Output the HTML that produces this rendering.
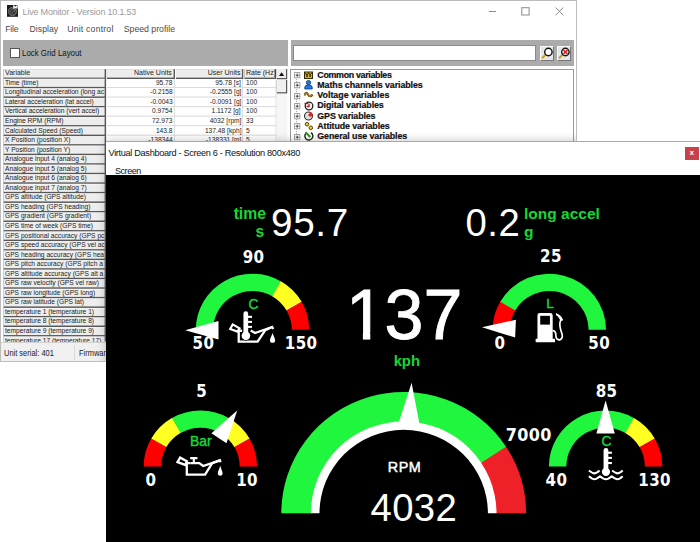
<!DOCTYPE html>
<html><head><meta charset="utf-8"><title>Live Monitor</title>
<style>
html,body{margin:0;padding:0;background:#fff;}
body{width:700px;height:542px;position:relative;overflow:hidden;font-family:"Liberation Sans",sans-serif;}
#mw{position:absolute;left:0;top:0;width:577px;height:362px;background:#fff;overflow:hidden;}
#mwb{position:absolute;left:0;top:0;width:577px;height:362px;box-sizing:border-box;border:1px solid #bcbcbc;}
.abs{position:absolute;}
#title{left:22.6px;top:5.5px;font-size:9px;letter-spacing:-0.2px;color:#9a9a9a;white-space:nowrap;line-height:12px;}
.menu{top:23.4px;font-size:8.7px;color:#4a4a4a;white-space:nowrap;line-height:12px;}
.gp{background:#ababab;top:40px;height:26.4px;}
#cb{left:10.3px;top:48.3px;width:9.4px;height:9.6px;background:#fff;border:1px solid #555;box-sizing:border-box;}
#lock{left:22px;top:47.2px;font-size:9.4px;color:#111;line-height:11px;white-space:nowrap;transform:scaleX(0.84);transform-origin:0 0;}
.hd{top:69px;height:10px;box-sizing:border-box;font-size:7.4px;line-height:8.4px;color:#222;white-space:nowrap;overflow:visible;}
.r{position:absolute;left:0;width:290px;height:9.545px;}
.r div{position:absolute;top:0;height:9.545px;box-sizing:border-box;font-size:7px;line-height:8.2px;color:#222;white-space:nowrap;overflow:hidden;}
.c1{left:3px;width:101.4px;padding-left:2.3px;}
.tl{display:inline-block;transform:scaleX(0.95);transform-origin:0 50%;}
.trr{display:inline-block;transform:scaleX(0.95);transform-origin:100% 50%;}
.c2{left:107px;width:68px;text-align:right;padding-right:2.4px;}
.c3{left:175px;width:68.5px;text-align:right;padding-right:2.4px;}
.c4{left:243.5px;width:32.5px;padding-left:2.8px;}
#sb{left:275.5px;top:68.5px;width:11.5px;height:273px;background:#f4f4f4;}
#status{left:0;top:341.5px;width:575px;height:19.5px;background:#f0f0f0;border-top:1px solid #d0d0d0;font-size:8.8px;color:#1a1a1a;}
#status span.t{transform:scaleX(0.85);transform-origin:0 0;line-height:11px;}
.tn{position:absolute;left:291px;height:10px;width:280px;white-space:nowrap;}
.pm{position:absolute;left:2.6px;top:2.3px;}
.ti{position:absolute;left:12.5px;top:0;}
.tt{position:absolute;left:26.3px;top:-1.2px;font-weight:bold;font-size:8.9px;line-height:12px;color:#111;letter-spacing:-0.27px;-webkit-text-stroke:0.2px #111;}
#dw{position:absolute;left:106px;top:141px;width:594px;height:402px;background:#fff;box-shadow:inset 0 1px 0 #a8a8a8;}
#dtitle{left:2.5px;top:5.8px;font-size:9.2px;letter-spacing:-0.33px;color:#111;line-height:12px;white-space:nowrap;}
#dscreen{left:9px;top:23.6px;font-size:9px;letter-spacing:-0.45px;color:#111;line-height:12px;}
#dx{left:579px;top:5.5px;width:13.5px;height:13.5px;background:#c8404a;color:#fff;font-size:8px;font-weight:bold;line-height:12.5px;text-align:center;}
#dash{position:absolute;left:106px;top:174.5px;width:594px;height:367.5px;background:#000;}
.lb{font-family:"DejaVu Sans Condensed","DejaVu Sans",sans-serif;font-weight:bold;fill:#fff;}
.gt{font-family:"Liberation Sans",sans-serif;fill:#14d834;}
.wt{font-family:"Liberation Sans",sans-serif;fill:#fff;}
</style></head><body>
<div id="mw">
<svg class="abs" style="left:6.6px;top:5.1px" width="11.8" height="11.8" viewBox="0 0 12 12"><rect width="12" height="12" fill="#1c1c1c"/><circle cx="5.6" cy="6.6" r="4.2" fill="#5a5a5a"/><path d="M2,9.5 L9,2.5 M1.5,6.5 L6,2 M4.5,11 L10,5.5 M2.5,3.5 L8.5,9.5 M1.5,6 L6,10.5" stroke="#2a2a2a" stroke-width="0.9" fill="none"/><circle cx="5.6" cy="6.6" r="4.2" fill="none" stroke="#8a8a8a" stroke-width="0.7"/><path d="M7,3.8 L7,0.9 L8.6,2.6 L10.2,0.9 L10.2,3.8" fill="none" stroke="#fff" stroke-width="1.2"/></svg>
<div id="title" class="abs">Live Monitor - Version 10.1.53</div>
<svg class="abs" style="left:485.6px;top:4.8px" width="84" height="14" viewBox="0 0 84 14"><g fill="none" stroke="#8a8a8a" stroke-width="1"><path d="M3,6.5 L10,6.5"/><rect x="35.8" y="2.7" width="7.3" height="7.3"/><path d="M69.5,2.5 L77.3,10.3 M77.3,2.5 L69.5,10.3"/></g></svg>
<div class="menu abs" style="left:5.3px;letter-spacing:-0.25px">File</div>
<div class="menu abs" style="left:29.6px">Display</div>
<div class="menu abs" style="left:67.2px;letter-spacing:0.2px">Unit control</div>
<div class="menu abs" style="left:123.8px">Speed profile</div>
<div class="gp abs" style="left:3px;width:284.5px"></div>
<div class="gp abs" style="left:291px;width:283px"></div>
<div id="cb" class="abs"></div>
<div id="lock" class="abs">Lock Grid Layout</div>
<div class="abs" style="left:292.5px;top:44.5px;width:243px;height:16px;background:#fff;border:1px solid #8a8a8a;box-sizing:border-box"></div>
<div class="abs" style="left:540px;top:46px;width:14.4px;height:14.6px;background:#e6e6e6;border:1px solid #f8f8f8;border-right-color:#777;border-bottom-color:#777;box-sizing:border-box"></div>
<div class="abs" style="left:557px;top:46px;width:14.4px;height:14.6px;background:#e6e6e6;border:1px solid #f8f8f8;border-right-color:#777;border-bottom-color:#777;box-sizing:border-box"></div>
<svg class="abs" style="left:540.1px;top:46.4px" width="32" height="14" viewBox="0 0 32 14"><g fill="none"><path d="M2,12.3 L5.5,8.8" stroke="#c8a020" stroke-width="2"/><circle cx="8.4" cy="6" r="3.7" stroke="#111" stroke-width="1.4" fill="#fff"/><path d="M19,12.3 L22.5,8.8" stroke="#c8a020" stroke-width="2"/><circle cx="25.4" cy="6" r="3.7" stroke="#111" stroke-width="1.4" fill="#fff"/><path d="M23.4,4 L27.4,8 M27.4,4 L23.4,8" stroke="#e01010" stroke-width="1.5"/></g></svg>
<svg class="abs" style="left:0;top:0" width="300" height="342" viewBox="0 0 300 342">
<rect x="3.5" y="69.1" width="102.6" height="272.4" fill="#585858"/>
<rect x="3.5" y="69.1" width="101.1" height="8.5" fill="#ececec"/>
<rect x="3.5" y="78.85" width="101.1" height="8.05" fill="#ededed"/>
<rect x="3.5" y="78.85" width="101.1" height="0.6" fill="#fafafa"/>
<rect x="3.5" y="88.39" width="101.1" height="8.05" fill="#ededed"/>
<rect x="3.5" y="88.39" width="101.1" height="0.6" fill="#fafafa"/>
<rect x="3.5" y="97.94" width="101.1" height="8.05" fill="#ededed"/>
<rect x="3.5" y="97.94" width="101.1" height="0.6" fill="#fafafa"/>
<rect x="3.5" y="107.48" width="101.1" height="8.05" fill="#ededed"/>
<rect x="3.5" y="107.48" width="101.1" height="0.6" fill="#fafafa"/>
<rect x="3.5" y="117.03" width="101.1" height="8.05" fill="#ededed"/>
<rect x="3.5" y="117.03" width="101.1" height="0.6" fill="#fafafa"/>
<rect x="3.5" y="126.57" width="101.1" height="8.05" fill="#ededed"/>
<rect x="3.5" y="126.57" width="101.1" height="0.6" fill="#fafafa"/>
<rect x="3.5" y="136.12" width="101.1" height="8.05" fill="#ededed"/>
<rect x="3.5" y="136.12" width="101.1" height="0.6" fill="#fafafa"/>
<rect x="3.5" y="145.66" width="101.1" height="8.05" fill="#ededed"/>
<rect x="3.5" y="145.66" width="101.1" height="0.6" fill="#fafafa"/>
<rect x="3.5" y="155.21" width="101.1" height="8.05" fill="#ededed"/>
<rect x="3.5" y="155.21" width="101.1" height="0.6" fill="#fafafa"/>
<rect x="3.5" y="164.75" width="101.1" height="8.05" fill="#ededed"/>
<rect x="3.5" y="164.75" width="101.1" height="0.6" fill="#fafafa"/>
<rect x="3.5" y="174.30" width="101.1" height="8.05" fill="#ededed"/>
<rect x="3.5" y="174.30" width="101.1" height="0.6" fill="#fafafa"/>
<rect x="3.5" y="183.84" width="101.1" height="8.05" fill="#ededed"/>
<rect x="3.5" y="183.84" width="101.1" height="0.6" fill="#fafafa"/>
<rect x="3.5" y="193.39" width="101.1" height="8.05" fill="#ededed"/>
<rect x="3.5" y="193.39" width="101.1" height="0.6" fill="#fafafa"/>
<rect x="3.5" y="202.94" width="101.1" height="8.05" fill="#ededed"/>
<rect x="3.5" y="202.94" width="101.1" height="0.6" fill="#fafafa"/>
<rect x="3.5" y="212.48" width="101.1" height="8.05" fill="#ededed"/>
<rect x="3.5" y="212.48" width="101.1" height="0.6" fill="#fafafa"/>
<rect x="3.5" y="222.03" width="101.1" height="8.05" fill="#ededed"/>
<rect x="3.5" y="222.03" width="101.1" height="0.6" fill="#fafafa"/>
<rect x="3.5" y="231.57" width="101.1" height="8.05" fill="#ededed"/>
<rect x="3.5" y="231.57" width="101.1" height="0.6" fill="#fafafa"/>
<rect x="3.5" y="241.11" width="101.1" height="8.05" fill="#ededed"/>
<rect x="3.5" y="241.11" width="101.1" height="0.6" fill="#fafafa"/>
<rect x="3.5" y="250.66" width="101.1" height="8.05" fill="#ededed"/>
<rect x="3.5" y="250.66" width="101.1" height="0.6" fill="#fafafa"/>
<rect x="3.5" y="260.20" width="101.1" height="8.05" fill="#ededed"/>
<rect x="3.5" y="260.20" width="101.1" height="0.6" fill="#fafafa"/>
<rect x="3.5" y="269.75" width="101.1" height="8.05" fill="#ededed"/>
<rect x="3.5" y="269.75" width="101.1" height="0.6" fill="#fafafa"/>
<rect x="3.5" y="279.29" width="101.1" height="8.05" fill="#ededed"/>
<rect x="3.5" y="279.29" width="101.1" height="0.6" fill="#fafafa"/>
<rect x="3.5" y="288.84" width="101.1" height="8.05" fill="#ededed"/>
<rect x="3.5" y="288.84" width="101.1" height="0.6" fill="#fafafa"/>
<rect x="3.5" y="298.38" width="101.1" height="8.05" fill="#ededed"/>
<rect x="3.5" y="298.38" width="101.1" height="0.6" fill="#fafafa"/>
<rect x="3.5" y="307.93" width="101.1" height="8.05" fill="#ededed"/>
<rect x="3.5" y="307.93" width="101.1" height="0.6" fill="#fafafa"/>
<rect x="3.5" y="317.48" width="101.1" height="8.05" fill="#ededed"/>
<rect x="3.5" y="317.48" width="101.1" height="0.6" fill="#fafafa"/>
<rect x="3.5" y="327.02" width="101.1" height="8.05" fill="#ededed"/>
<rect x="3.5" y="327.02" width="101.1" height="0.6" fill="#fafafa"/>
<rect x="3.5" y="336.56" width="101.1" height="8.05" fill="#ededed"/>
<rect x="3.5" y="336.56" width="101.1" height="0.6" fill="#fafafa"/>
<rect x="106.9" y="69.1" width="68.1" height="9.9" fill="#585858"/>
<rect x="106.9" y="69.1" width="66.7" height="8.5" fill="#ececec"/>
<rect x="176" y="69.1" width="67.3" height="9.9" fill="#585858"/>
<rect x="176" y="69.1" width="65.9" height="8.5" fill="#ececec"/>
<rect x="244.5" y="69.1" width="31.6" height="9.9" fill="#585858"/>
<rect x="244.5" y="69.1" width="30.2" height="8.5" fill="#ececec"/>
<rect x="106.9" y="86.95" width="169.6" height="1.1" fill="#dcdcdc"/>
<rect x="106.9" y="96.50" width="169.6" height="1.1" fill="#dcdcdc"/>
<rect x="106.9" y="106.04" width="169.6" height="1.1" fill="#dcdcdc"/>
<rect x="106.9" y="115.58" width="169.6" height="1.1" fill="#dcdcdc"/>
<rect x="106.9" y="125.13" width="169.6" height="1.1" fill="#dcdcdc"/>
<rect x="106.9" y="134.67" width="169.6" height="1.1" fill="#dcdcdc"/>
<rect x="106.9" y="144.22" width="169.6" height="1.1" fill="#dcdcdc"/>
<rect x="106.9" y="153.76" width="169.6" height="1.1" fill="#dcdcdc"/>
<rect x="106.9" y="163.31" width="169.6" height="1.1" fill="#dcdcdc"/>
<rect x="106.9" y="172.85" width="169.6" height="1.1" fill="#dcdcdc"/>
<rect x="106.9" y="182.40" width="169.6" height="1.1" fill="#dcdcdc"/>
<rect x="106.9" y="191.94" width="169.6" height="1.1" fill="#dcdcdc"/>
<rect x="106.9" y="201.49" width="169.6" height="1.1" fill="#dcdcdc"/>
<rect x="106.9" y="211.03" width="169.6" height="1.1" fill="#dcdcdc"/>
<rect x="106.9" y="220.58" width="169.6" height="1.1" fill="#dcdcdc"/>
<rect x="106.9" y="230.12" width="169.6" height="1.1" fill="#dcdcdc"/>
<rect x="106.9" y="239.67" width="169.6" height="1.1" fill="#dcdcdc"/>
<rect x="106.9" y="249.21" width="169.6" height="1.1" fill="#dcdcdc"/>
<rect x="106.9" y="258.76" width="169.6" height="1.1" fill="#dcdcdc"/>
<rect x="106.9" y="268.31" width="169.6" height="1.1" fill="#dcdcdc"/>
<rect x="106.9" y="277.85" width="169.6" height="1.1" fill="#dcdcdc"/>
<rect x="106.9" y="287.39" width="169.6" height="1.1" fill="#dcdcdc"/>
<rect x="106.9" y="296.94" width="169.6" height="1.1" fill="#dcdcdc"/>
<rect x="106.9" y="306.48" width="169.6" height="1.1" fill="#dcdcdc"/>
<rect x="106.9" y="316.03" width="169.6" height="1.1" fill="#dcdcdc"/>
<rect x="106.9" y="325.57" width="169.6" height="1.1" fill="#dcdcdc"/>
<rect x="106.9" y="335.12" width="169.6" height="1.1" fill="#dcdcdc"/>
<rect x="173.9" y="79" width="1" height="262.5" fill="#dcdcdc"/>
<rect x="242.1" y="79" width="1" height="262.5" fill="#dcdcdc"/>
<rect x="275.5" y="79" width="1" height="262.5" fill="#dcdcdc"/>
<rect x="276.6" y="69" width="10.6" height="272.5" fill="#f6f6f6"/>
<rect x="276.8" y="69" width="10.4" height="10.2" fill="#585858"/><rect x="276.8" y="69" width="9.2" height="9" fill="#efefef"/>
<rect x="276.8" y="80" width="10.4" height="13.4" fill="#585858"/><rect x="276.8" y="80" width="9.2" height="12.2" fill="#efefef"/>
<path d="M279,76 L281.6,72.3 L284.2,76 Z" fill="#111"/>
</svg>
<div class="hd abs" style="left:3px;width:103px;padding-left:2.3px"><span class="tl">Variable</span></div>
<div class="hd abs" style="left:107px;width:68px;text-align:right;padding-right:3.4px"><span class="trr">Native Units</span></div>
<div class="hd abs" style="left:176px;width:67.5px;text-align:right;padding-right:2.9px"><span class="trr">User Units</span></div>
<div class="hd abs" style="left:244.5px;width:32px;padding-left:1.5px"><span class="tl">Rate (Hz)</span></div>
<div class="r" style="top:78.85px"><div class="c1"><span class="tl">Time (time)</span></div><div class="c2"><span class="trr">95.78</span></div><div class="c3"><span class="trr">95.78 [s]</span></div><div class="c4"><span class="tl">100</span></div></div>
<div class="r" style="top:88.39px"><div class="c1"><span class="tl">Longitudinal acceleration (long ac</span></div><div class="c2"><span class="trr">-0.2158</span></div><div class="c3"><span class="trr">-0.2555 [g]</span></div><div class="c4"><span class="tl">100</span></div></div>
<div class="r" style="top:97.94px"><div class="c1"><span class="tl">Lateral acceleration (lat accel)</span></div><div class="c2"><span class="trr">-0.0043</span></div><div class="c3"><span class="trr">-0.0091 [g]</span></div><div class="c4"><span class="tl">100</span></div></div>
<div class="r" style="top:107.48px"><div class="c1"><span class="tl">Vertical acceleration (vert accel)</span></div><div class="c2"><span class="trr">0.9754</span></div><div class="c3"><span class="trr">1.1172 [g]</span></div><div class="c4"><span class="tl">100</span></div></div>
<div class="r" style="top:117.03px"><div class="c1"><span class="tl">Engine RPM (RPM)</span></div><div class="c2"><span class="trr">72.973</span></div><div class="c3"><span class="trr">4032 [rpm]</span></div><div class="c4"><span class="tl">33</span></div></div>
<div class="r" style="top:126.57px"><div class="c1"><span class="tl">Calculated Speed (Speed)</span></div><div class="c2"><span class="trr">143.8</span></div><div class="c3"><span class="trr">137.48 [kph]</span></div><div class="c4"><span class="tl">5</span></div></div>
<div class="r" style="top:136.12px"><div class="c1"><span class="tl">X Position (position X)</span></div><div class="c2"><span class="trr">-138344</span></div><div class="c3"><span class="trr">-138331 [m]</span></div><div class="c4"><span class="tl">5</span></div></div>
<div class="r" style="top:145.66px"><div class="c1"><span class="tl">Y Position (position Y)</span></div><div class="c2"><span class="trr"></span></div><div class="c3"><span class="trr"></span></div><div class="c4"><span class="tl"></span></div></div>
<div class="r" style="top:155.21px"><div class="c1"><span class="tl">Analogue input 4 (analog 4)</span></div><div class="c2"><span class="trr"></span></div><div class="c3"><span class="trr"></span></div><div class="c4"><span class="tl"></span></div></div>
<div class="r" style="top:164.75px"><div class="c1"><span class="tl">Analogue input 5 (analog 5)</span></div><div class="c2"><span class="trr"></span></div><div class="c3"><span class="trr"></span></div><div class="c4"><span class="tl"></span></div></div>
<div class="r" style="top:174.30px"><div class="c1"><span class="tl">Analogue input 6 (analog 6)</span></div><div class="c2"><span class="trr"></span></div><div class="c3"><span class="trr"></span></div><div class="c4"><span class="tl"></span></div></div>
<div class="r" style="top:183.84px"><div class="c1"><span class="tl">Analogue input 7 (analog 7)</span></div><div class="c2"><span class="trr"></span></div><div class="c3"><span class="trr"></span></div><div class="c4"><span class="tl"></span></div></div>
<div class="r" style="top:193.39px"><div class="c1"><span class="tl">GPS altitude (GPS altitude)</span></div><div class="c2"><span class="trr"></span></div><div class="c3"><span class="trr"></span></div><div class="c4"><span class="tl"></span></div></div>
<div class="r" style="top:202.94px"><div class="c1"><span class="tl">GPS heading (GPS heading)</span></div><div class="c2"><span class="trr"></span></div><div class="c3"><span class="trr"></span></div><div class="c4"><span class="tl"></span></div></div>
<div class="r" style="top:212.48px"><div class="c1"><span class="tl">GPS gradient (GPS gradient)</span></div><div class="c2"><span class="trr"></span></div><div class="c3"><span class="trr"></span></div><div class="c4"><span class="tl"></span></div></div>
<div class="r" style="top:222.03px"><div class="c1"><span class="tl">GPS time of week (GPS time)</span></div><div class="c2"><span class="trr"></span></div><div class="c3"><span class="trr"></span></div><div class="c4"><span class="tl"></span></div></div>
<div class="r" style="top:231.57px"><div class="c1"><span class="tl">GPS positional accuracy (GPS pc</span></div><div class="c2"><span class="trr"></span></div><div class="c3"><span class="trr"></span></div><div class="c4"><span class="tl"></span></div></div>
<div class="r" style="top:241.11px"><div class="c1"><span class="tl">GPS speed accuracy (GPS vel ac</span></div><div class="c2"><span class="trr"></span></div><div class="c3"><span class="trr"></span></div><div class="c4"><span class="tl"></span></div></div>
<div class="r" style="top:250.66px"><div class="c1"><span class="tl">GPS heading accuracy (GPS hea</span></div><div class="c2"><span class="trr"></span></div><div class="c3"><span class="trr"></span></div><div class="c4"><span class="tl"></span></div></div>
<div class="r" style="top:260.20px"><div class="c1"><span class="tl">GPS pitch accuracy (GPS pitch a</span></div><div class="c2"><span class="trr"></span></div><div class="c3"><span class="trr"></span></div><div class="c4"><span class="tl"></span></div></div>
<div class="r" style="top:269.75px"><div class="c1"><span class="tl">GPS altitude accuracy (GPS alt a</span></div><div class="c2"><span class="trr"></span></div><div class="c3"><span class="trr"></span></div><div class="c4"><span class="tl"></span></div></div>
<div class="r" style="top:279.29px"><div class="c1"><span class="tl">GPS raw velocity (GPS vel raw)</span></div><div class="c2"><span class="trr"></span></div><div class="c3"><span class="trr"></span></div><div class="c4"><span class="tl"></span></div></div>
<div class="r" style="top:288.84px"><div class="c1"><span class="tl">GPS raw longitude (GPS long)</span></div><div class="c2"><span class="trr"></span></div><div class="c3"><span class="trr"></span></div><div class="c4"><span class="tl"></span></div></div>
<div class="r" style="top:298.38px"><div class="c1"><span class="tl">GPS raw latitude (GPS lat)</span></div><div class="c2"><span class="trr"></span></div><div class="c3"><span class="trr"></span></div><div class="c4"><span class="tl"></span></div></div>
<div class="r" style="top:307.93px"><div class="c1"><span class="tl">temperature 1 (temperature 1)</span></div><div class="c2"><span class="trr"></span></div><div class="c3"><span class="trr"></span></div><div class="c4"><span class="tl"></span></div></div>
<div class="r" style="top:317.48px"><div class="c1"><span class="tl">temperature 8 (temperature 8)</span></div><div class="c2"><span class="trr"></span></div><div class="c3"><span class="trr"></span></div><div class="c4"><span class="tl"></span></div></div>
<div class="r" style="top:327.02px"><div class="c1"><span class="tl">temperature 9 (temperature 9)</span></div><div class="c2"><span class="trr"></span></div><div class="c3"><span class="trr"></span></div><div class="c4"><span class="tl"></span></div></div>
<div class="r" style="top:336.56px"><div class="c1"><span class="tl">temperature 17 (temperature 17)</span></div><div class="c2"><span class="trr"></span></div><div class="c3"><span class="trr"></span></div><div class="c4"><span class="tl"></span></div></div>
<div class="abs" style="left:290px;top:68.5px;width:284px;height:80px;background:#fff;border:1px solid #999;box-sizing:border-box"></div>
<div class="abs" style="left:296.3px;top:74px;width:0;height:70px;border-left:0.8px dotted #aaa"></div>
<div class="tn" style="top:69.8px"><svg class="pm" width="7" height="7" viewBox="0 0 7 7"><rect x="0.6" y="0.6" width="5.2" height="5.2" fill="#fff" stroke="#8a8a8a" stroke-width="0.8"/><path d="M1.6,3.2 H4.8 M3.2,1.6 V4.8" stroke="#222" stroke-width="0.8" fill="none"/><path d="M5.8,3.2 H8" stroke="#aaa" stroke-width="0.7"/></svg><svg class="ti" width="10" height="10" viewBox="0 0 10 10"><rect x="0.5" y="2" width="8" height="6.5" fill="#d8b030" stroke="#3a2a00" stroke-width="1"/><path d="M0.5,2 L3,5 L4.5,2.5 L6,5 L8.5,2" fill="none" stroke="#3a2a00" stroke-width="1"/><circle cx="3" cy="6" r="1" fill="#3a2a00"/><circle cx="6.2" cy="6" r="1" fill="#3a2a00"/></svg><span class="tt" style="letter-spacing:-0.32px">Common variables</span></div>
<div class="tn" style="top:80.0px"><svg class="pm" width="7" height="7" viewBox="0 0 7 7"><rect x="0.6" y="0.6" width="5.2" height="5.2" fill="#fff" stroke="#8a8a8a" stroke-width="0.8"/><path d="M1.6,3.2 H4.8 M3.2,1.6 V4.8" stroke="#222" stroke-width="0.8" fill="none"/><path d="M5.8,3.2 H8" stroke="#aaa" stroke-width="0.7"/></svg><svg class="ti" width="10" height="10" viewBox="0 0 10 10"><circle cx="4.5" cy="2.6" r="2.2" fill="#1e78e0" stroke="#0a3a80" stroke-width="0.8"/><path d="M0.8,9 L0.8,7 Q0.8,5 4.5,5 Q8.2,5 8.2,7 L8.2,9 Z" fill="#1e78e0" stroke="#0a3a80" stroke-width="0.8"/></svg><span class="tt" style="letter-spacing:-0.09px">Maths channels variables</span></div>
<div class="tn" style="top:90.3px"><svg class="pm" width="7" height="7" viewBox="0 0 7 7"><rect x="0.6" y="0.6" width="5.2" height="5.2" fill="#fff" stroke="#8a8a8a" stroke-width="0.8"/><path d="M1.6,3.2 H4.8 M3.2,1.6 V4.8" stroke="#222" stroke-width="0.8" fill="none"/><path d="M5.8,3.2 H8" stroke="#aaa" stroke-width="0.7"/></svg><svg class="ti" width="10" height="10" viewBox="0 0 10 10"><path d="M0.5,5.5 Q2,1 4,4.5 T8.5,4.5" fill="none" stroke="#6a4a10" stroke-width="2.2"/><path d="M0.5,5.5 Q2,1 4,4.5 T8.5,4.5" fill="none" stroke="#c09030" stroke-width="1"/></svg><span class="tt" style="letter-spacing:-0.02px">Voltage variables</span></div>
<div class="tn" style="top:100.5px"><svg class="pm" width="7" height="7" viewBox="0 0 7 7"><rect x="0.6" y="0.6" width="5.2" height="5.2" fill="#fff" stroke="#8a8a8a" stroke-width="0.8"/><path d="M1.6,3.2 H4.8 M3.2,1.6 V4.8" stroke="#222" stroke-width="0.8" fill="none"/><path d="M5.8,3.2 H8" stroke="#aaa" stroke-width="0.7"/></svg><svg class="ti" width="10" height="10" viewBox="0 0 10 10"><circle cx="5" cy="5" r="3.8" fill="#fff" stroke="#222" stroke-width="1.3"/><path d="M5,2.5 L5,5.5 L2.5,5.5" fill="none" stroke="#c01010" stroke-width="1.3"/><path d="M0.5,2.5 L4,2.5" stroke="#c01010" stroke-width="1.3"/></svg><span class="tt" style="letter-spacing:-0.1px">Digital variables</span></div>
<div class="tn" style="top:110.8px"><svg class="pm" width="7" height="7" viewBox="0 0 7 7"><rect x="0.6" y="0.6" width="5.2" height="5.2" fill="#fff" stroke="#8a8a8a" stroke-width="0.8"/><path d="M1.6,3.2 H4.8 M3.2,1.6 V4.8" stroke="#222" stroke-width="0.8" fill="none"/><path d="M5.8,3.2 H8" stroke="#aaa" stroke-width="0.7"/></svg><svg class="ti" width="10" height="10" viewBox="0 0 10 10"><circle cx="4.5" cy="5" r="4" fill="#ddd" stroke="#333" stroke-width="1.1"/><path d="M4,4.5 L6.5,0.8 L8.8,3.2 L7,6 Z" fill="#ee1c1c"/></svg><span class="tt" style="letter-spacing:-0.12px">GPS variables</span></div>
<div class="tn" style="top:121.0px"><svg class="pm" width="7" height="7" viewBox="0 0 7 7"><rect x="0.6" y="0.6" width="5.2" height="5.2" fill="#fff" stroke="#8a8a8a" stroke-width="0.8"/><path d="M1.6,3.2 H4.8 M3.2,1.6 V4.8" stroke="#222" stroke-width="0.8" fill="none"/><path d="M5.8,3.2 H8" stroke="#aaa" stroke-width="0.7"/></svg><svg class="ti" width="10" height="10" viewBox="0 0 10 10"><circle cx="3" cy="3.2" r="1.8" fill="#f0d020" stroke="#443300" stroke-width="0.9"/><circle cx="6.8" cy="6.8" r="1.8" fill="#f0d020" stroke="#443300" stroke-width="0.9"/></svg><span class="tt" style="letter-spacing:-0.12px">Attitude variables</span></div>
<div class="tn" style="top:131.3px"><svg class="pm" width="7" height="7" viewBox="0 0 7 7"><rect x="0.6" y="0.6" width="5.2" height="5.2" fill="#fff" stroke="#8a8a8a" stroke-width="0.8"/><path d="M1.6,3.2 H4.8 M3.2,1.6 V4.8" stroke="#222" stroke-width="0.8" fill="none"/><path d="M5.8,3.2 H8" stroke="#aaa" stroke-width="0.7"/></svg><svg class="ti" width="10" height="10" viewBox="0 0 10 10"><path d="M2.2,2 A4,4 0 1 0 7,1.6" fill="none" stroke="#222" stroke-width="1.4"/><path d="M1.5,1.2 L6,5.8" stroke="#2a9a20" stroke-width="2"/><circle cx="5.6" cy="5.5" r="1.1" fill="#2a9a20"/></svg><span class="tt" style="letter-spacing:-0.09px">General use variables</span></div>
<div id="status" class="abs"><span class="abs t" style="left:4px;top:5.8px;white-space:nowrap">Unit serial: 401</span><span class="abs" style="left:73.5px;top:2px;width:1px;height:15px;background:#d8d8d8"></span><span class="abs t" style="left:79.4px;top:5.8px;white-space:nowrap">Firmware version: 10</span></div>
<div class="abs" style="left:106px;top:141px;width:600px;height:402px;box-shadow:0 0 9px rgba(0,0,0,0.24)"></div>
<div id="mwb"></div>
</div>
<div id="dw">
<div id="dtitle" class="abs">Virtual Dashboard - Screen 6 - Resolution 800x480</div>
<div id="dscreen" class="abs">Screen</div>
<div id="dx" class="abs">x</div>
</div>
<div id="dash">
<svg style="position:absolute;left:-106px;top:-174.5px" width="700" height="542" viewBox="0 0 700 542">
<g transform="translate(0,329.8) scale(1,0.988) translate(0,-329.8)"><path d="M195.80,329.80 A56.7,56.7 0 0 1 281.11,280.85 L272.33,295.87 A39.3,39.3 0 0 0 213.20,329.80 Z" fill="#20f63e"/>
<path d="M280.85,280.70 A56.7,56.7 0 0 1 301.75,301.71 L286.64,310.33 A39.3,39.3 0 0 0 272.15,295.77 Z" fill="#ffff22"/>
<path d="M301.60,301.45 A56.7,56.7 0 0 1 309.20,329.80 L291.80,329.80 A39.3,39.3 0 0 0 286.53,310.15 Z" fill="#ff0000"/>
</g><polygon points="185.10,330.30 218.50,321.10 218.50,339.50" fill="#fff"/>

<g transform="translate(0,329.8) scale(1,0.988) translate(0,-329.8)"><path d="M492.60,329.80 A56.7,56.7 0 0 1 500.35,301.19 L515.37,309.97 A39.3,39.3 0 0 0 510.00,329.80 Z" fill="#ff0000"/>
<path d="M500.20,301.45 A56.7,56.7 0 0 1 606.00,329.80 L588.60,329.80 A39.3,39.3 0 0 0 515.27,310.15 Z" fill="#20f63e"/>
</g><polygon points="481.96,327.16 515.92,319.63 515.14,337.62" fill="#fff"/>

<g transform="translate(0,466.5) scale(1,0.988) translate(0,-466.5)"><path d="M143.70,466.50 A56.7,56.7 0 0 1 151.45,437.89 L166.47,446.67 A39.3,39.3 0 0 0 161.10,466.50 Z" fill="#ff0000"/>
<path d="M151.30,438.15 A56.7,56.7 0 0 1 172.31,417.25 L180.93,432.36 A39.3,39.3 0 0 0 166.37,446.85 Z" fill="#ffff22"/>
<path d="M172.05,417.40 A56.7,56.7 0 0 1 229.01,417.55 L220.23,432.57 A39.3,39.3 0 0 0 180.75,432.47 Z" fill="#20f63e"/>
<path d="M228.75,417.40 A56.7,56.7 0 0 1 249.65,438.41 L234.54,447.03 A39.3,39.3 0 0 0 220.05,432.47 Z" fill="#ffff22"/>
<path d="M249.50,438.15 A56.7,56.7 0 0 1 257.10,466.50 L239.70,466.50 A39.3,39.3 0 0 0 234.43,446.85 Z" fill="#ff0000"/>
</g><polygon points="237.18,410.50 226.48,443.19 211.43,433.31" fill="#fff"/>

<g transform="translate(0,466.5) scale(1,0.988) translate(0,-466.5)"><path d="M548.90,466.50 A56.7,56.7 0 0 1 634.21,417.55 L625.43,432.57 A39.3,39.3 0 0 0 566.30,466.50 Z" fill="#20f63e"/>
<path d="M633.95,417.40 A56.7,56.7 0 0 1 654.85,438.41 L639.74,447.03 A39.3,39.3 0 0 0 625.25,432.47 Z" fill="#ffff22"/>
<path d="M654.70,438.15 A56.7,56.7 0 0 1 662.30,466.50 L644.90,466.50 A39.3,39.3 0 0 0 639.63,446.85 Z" fill="#ff0000"/>
</g><polygon points="605.60,400.50 614.80,433.50 596.40,433.50" fill="#fff"/>

<g transform="translate(0,513.2) scale(1,0.99) translate(0,-513.2)">
<path d="M281.30,513.20 A122.4,122.4 0 0 1 506.35,446.54 L480.86,463.09 A92,92 0 0 0 311.70,513.20 Z" fill="#20f63e"/>
<path d="M506.00,446.00 A122.4,122.4 0 0 1 526.10,513.20 L495.70,513.20 A92,92 0 0 0 480.59,462.69 Z" fill="#ee2028"/>
<path d="M310.90,513.20 A92.8,92.8 0 0 1 496.50,513.20 L487.90,513.20 A84.2,84.2 0 0 0 319.50,513.20 Z" fill="#fff"/>
</g>
<polygon points="411.6,382.7 399.2,421.3 397.5,425 420.5,426 419.2,422.6" fill="#fff"/>
<text x="253.6" y="262.5" font-size="16.8" text-anchor="middle" letter-spacing="0.4" class="lb">90</text>
<text x="203.39999999999998" y="349.3" font-size="16.8" text-anchor="middle" letter-spacing="0.4" class="lb">50</text>
<text x="301.09999999999997" y="349.3" font-size="16.8" text-anchor="middle" letter-spacing="0.4" class="lb">150</text>
<text x="550.9000000000001" y="261.90000000000003" font-size="16.8" text-anchor="middle" letter-spacing="0.4" class="lb">25</text>
<text x="499.9" y="349.3" font-size="16.8" text-anchor="middle" letter-spacing="0.4" class="lb">0</text>
<text x="599.2" y="349.3" font-size="16.8" text-anchor="middle" letter-spacing="0.4" class="lb">50</text>
<text x="201.7" y="397.2" font-size="16.8" text-anchor="middle" letter-spacing="0.4" class="lb">5</text>
<text x="151.0" y="485.90000000000003" font-size="16.8" text-anchor="middle" letter-spacing="0.4" class="lb">0</text>
<text x="247.1" y="485.90000000000003" font-size="16.8" text-anchor="middle" letter-spacing="0.4" class="lb">10</text>
<text x="606.6" y="397.2" font-size="16.8" text-anchor="middle" letter-spacing="0.4" class="lb">85</text>
<text x="556.4000000000001" y="486.1" font-size="16.8" text-anchor="middle" letter-spacing="0.4" class="lb">40</text>
<text x="654.6" y="485.90000000000003" font-size="16.8" text-anchor="middle" letter-spacing="0.4" class="lb">130</text>
<text x="528.8000000000001" y="440.6" font-size="17.8" text-anchor="middle" letter-spacing="0.4" class="lb">7000</text>
<text x="253.4" y="308.7" font-size="13.8" text-anchor="middle" font-weight="normal" class="gt" stroke="#14d834" stroke-width="0.45">C</text>
<text x="550" y="307.9" font-size="13.4" text-anchor="middle" font-weight="normal" class="gt" stroke="#14d834" stroke-width="0.45">L</text>
<text x="200.8" y="446.2" font-size="13.9" text-anchor="middle" font-weight="normal" class="gt" stroke="#14d834" stroke-width="0.45">Bar</text>
<text x="606.6" y="445.7" font-size="13.8" text-anchor="middle" font-weight="normal" class="gt" stroke="#14d834" stroke-width="0.45">C</text>
<text x="406.8" y="366.2" font-size="14.8" text-anchor="middle" font-weight="bold" class="gt">kph</text>
<text x="265.9" y="219.4" font-size="15.7" text-anchor="end" font-weight="bold" class="gt">time</text>
<text x="264.3" y="236.8" font-size="15.7" text-anchor="end" font-weight="bold" class="gt">s</text>
<text x="524" y="219" font-size="15.5" text-anchor="start" font-weight="bold" class="gt">long accel</text>
<text x="524" y="236.8" font-size="15.5" text-anchor="start" font-weight="bold" class="gt">g</text>
<text y="338.6" font-size="70" class="wt" stroke="#fff" stroke-width="0.9"><tspan x="345.9">1</tspan><tspan x="384.5">3</tspan><tspan x="423.6">7</tspan></text>
<rect x="348" y="332" width="14.9" height="8.5" fill="#000"/><rect x="370.3" y="332" width="13" height="8.5" fill="#000"/>
<text x="309.9" y="236.2" font-size="38.7" text-anchor="middle" letter-spacing="0.6" class="wt">95.7</text>
<text x="493" y="236.1" font-size="38.3" text-anchor="middle" letter-spacing="0.6" class="wt">0.2</text>
<text x="413.8" y="520.9" font-size="38.3" text-anchor="middle" letter-spacing="0.3" class="wt">4032</text>
<text x="404.5" y="472.1" font-size="14.4" text-anchor="middle" letter-spacing="0.5" class="wt" stroke="#fff" stroke-width="0.45">RPM</text>
<g transform="translate(222,304) scale(0.085714)" fill="none" stroke="#fff" stroke-width="27" stroke-linejoin="miter">
<polygon points="95,292 125,238 205,285 180,322" stroke-width="25"/>
<polyline points="235,312 195,312 195,440 415,440 505,305 585,268 598,292"/>
<polyline points="335,310 385,338 585,268"/>
<g stroke="#000" stroke-width="14" fill="#fff">
<rect x="250" y="85" width="55" height="290" rx="27"/>
<circle cx="279" cy="370" r="50"/>
</g>
<g stroke="none" fill="#fff">
<rect x="250" y="86" width="55" height="286" rx="27"/>
<circle cx="279" cy="370" r="50"/>
<rect x="296" y="138" width="54" height="24"/><rect x="296" y="197" width="54" height="24"/><rect x="296" y="255" width="54" height="24"/>
<path d="M590,338 C578,378 560,400 560,422 A30,30 0 0 0 620,422 C620,400 602,378 590,338 Z"/>
</g></g>
<g transform="translate(525,296) scale(0.09231)" fill="#fff" stroke="none">
<path d="M135,470 L135,212 A27,27 0 0 1 162,185 L273,185 A27,27 0 0 1 300,212 L300,470 Z"/>
<rect x="165" y="215" width="105" height="95" fill="#000"/>
<rect x="115" y="464" width="210" height="36" rx="6"/>
<path d="M298,375 C330,375 335,400 335,430 C335,475 380,490 400,455 C415,430 395,400 385,360 C375,320 372,290 388,262" fill="none" stroke="#fff" stroke-width="18"/>
<path d="M335,183 C372,195 402,225 414,262 L384,274 C376,242 356,216 335,206 Z"/>
</g>
<g transform="translate(170,430) scale(0.096)" fill="none" stroke="#fff" stroke-width="24">
<polygon points="78,335 106,288 176,326 160,364"/>
<polyline points="215,345 175,345 175,465 365,465 440,345 520,316 526,336"/>
<polyline points="215,345 305,345 345,375 520,316"/>
<line x1="210" y1="293" x2="286" y2="293"/>
<line x1="248" y1="293" x2="248" y2="345" stroke-width="22"/>
<path d="M523,372 C512,410 498,430 498,452 A25,25 0 0 0 548,452 C548,430 534,410 523,372 Z" fill="#fff" stroke="none"/>
</g>
<g transform="translate(576,430) scale(0.10327)" fill="#fff" stroke="none">
<rect x="267" y="175" width="46" height="240" rx="23"/>
<circle cx="290" cy="405" r="40"/>
<rect x="305" y="210" width="43" height="20"/><rect x="305" y="260" width="43" height="20"/><rect x="305" y="310" width="43" height="20"/>
<g fill="none" stroke="#fff" stroke-width="20" stroke-linejoin="round">
<path d="M125,392 Q160,420 178,420 Q196,420 228,392"/>
<path d="M350,392 Q384,420 402,420 Q420,420 452,392"/>
<path d="M125,448 Q160,477 178,477 Q196,477 232,448 Q268,477 290,477 Q312,477 346,448 Q384,477 402,477 Q420,477 452,448"/>
</g></g>
</svg>
</div>
</body></html>
